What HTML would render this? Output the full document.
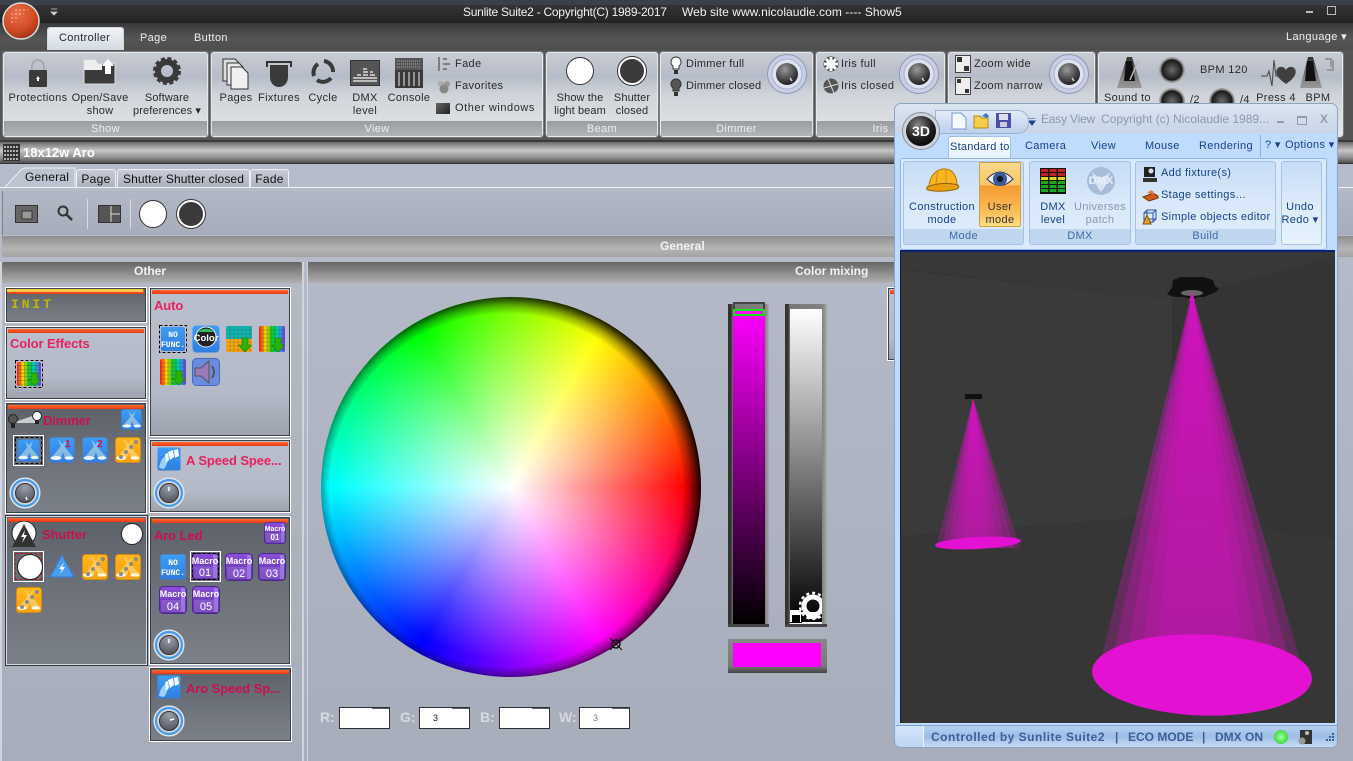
<!DOCTYPE html>
<html><head><meta charset="utf-8"><style>
html,body{margin:0;padding:0}
body{width:1353px;height:761px;overflow:hidden;position:relative;background:#a9afbd;font-family:"Liberation Sans",sans-serif;font-size:11px;color:#2a2a2a}
div,svg{position:absolute}
.t{position:absolute;white-space:nowrap;letter-spacing:.35px;line-height:13px}
.c{transform:translateX(-50%);text-align:center}
.g{background:linear-gradient(#c8ccd4,#b6bcc8 28%,#cfd4da 50%,#e3e6e8 100%);border:1px solid #e6e8ea;border-radius:3px;top:52px;height:83px;box-shadow:0 0 0 1px #77797c}
.gl{position:absolute;left:0;right:0;bottom:0;height:15px;background:linear-gradient(#9a9d9f,#b2b5b7);color:#eee;text-align:center;line-height:16px;letter-spacing:.35px}
.p{border:1px solid #fff;box-shadow:inset 0 0 0 1px #3d4048;background:linear-gradient(#b9bfcc,#b4bac7 70%,#9ca2ad)}
.p:before{content:"";position:absolute;left:2px;right:2px;top:2px;height:4px;background:linear-gradient(#ff6a2a,#e8391a)}
.d{background:linear-gradient(#5d616a,#6f747d 60%,#7b8089)}
.h{color:#e8215f;font-weight:bold;font-size:13px;position:absolute;white-space:nowrap;letter-spacing:-.1px}
.d .h{color:#c8124e}
.b{font-size:12px;font-weight:bold;color:#f2f2f2;position:absolute;white-space:nowrap}
.bt{color:#15428b;position:absolute;white-space:nowrap;letter-spacing:.35px;line-height:13px}
.tb{position:absolute;top:169px;height:18px;border:1px solid #eef0f4;border-bottom:0;border-radius:3px 3px 0 0;background:linear-gradient(#c8ccd6,#aab0be);color:#111;font-size:12px;line-height:18px;text-align:center;letter-spacing:.3px}
.in{position:absolute;top:707px;width:49px;height:20px;background:#fff;border:1px solid #2e3034;font-size:9px;color:#111;line-height:20px}
.in:after{content:"";position:absolute;right:0;top:0;width:17px;height:1px;background:#5c6272}
.lb{position:absolute;top:709px;font-size:14px;font-weight:bold;color:#d7dbe0}
.cn path{opacity:.42}
</style></head><body>

<svg width="0" height="0" style="left:0;top:0"><defs>
<linearGradient id="blue" x1="0" y1="0" x2="0" y2="1"><stop offset="0" stop-color="#3d9cf5"/><stop offset="1" stop-color="#2f7fe0"/></linearGradient>
<linearGradient id="ora" x1="0" y1="0" x2="0" y2="1"><stop offset="0" stop-color="#ffb81f"/><stop offset="1" stop-color="#f7a010"/></linearGradient>
<linearGradient id="pur" x1="0" y1="0" x2="0" y2="1"><stop offset="0" stop-color="#8a4fd8"/><stop offset="1" stop-color="#5f2fa8"/></linearGradient>
<linearGradient id="rb" x1="0" y1="0" x2="1" y2="0"><stop offset="0" stop-color="#f11"/><stop offset=".25" stop-color="#fd0"/><stop offset=".5" stop-color="#1c2"/><stop offset=".75" stop-color="#0cc"/><stop offset="1" stop-color="#83e"/></linearGradient>
<linearGradient id="metal" x1="0" y1="0" x2="0" y2="1"><stop offset="0" stop-color="#333"/><stop offset=".55" stop-color="#777"/><stop offset="1" stop-color="#999"/></linearGradient>
<radialGradient id="kn" cx=".4" cy=".3" r=".8"><stop offset="0" stop-color="#999"/><stop offset=".6" stop-color="#444"/><stop offset="1" stop-color="#111"/></radialGradient>
<radialGradient id="kn2" cx=".5" cy=".2" r=".9"><stop offset="0" stop-color="#9aa0aa"/><stop offset="1" stop-color="#474c55"/></radialGradient>
<radialGradient id="btn" cx=".5" cy=".5" r=".5"><stop offset="0" stop-color="#6a6a6a"/><stop offset=".62" stop-color="#2a2a2a"/><stop offset=".78" stop-color="#1a1a1a"/><stop offset=".88" stop-color="#888"/><stop offset="1" stop-color="#aaa"/></radialGradient>
<linearGradient id="cone1" gradientUnits="userSpaceOnUse" x1="0" y1="290" x2="0" y2="670"><stop offset="0" stop-color="#dc10c8" stop-opacity="1"/><stop offset=".5" stop-color="#cc14b8" stop-opacity=".88"/><stop offset="1" stop-color="#cc14b8" stop-opacity=".62"/></linearGradient>
<linearGradient id="cone2" gradientUnits="userSpaceOnUse" x1="0" y1="397" x2="0" y2="545"><stop offset="0" stop-color="#dc10c8" stop-opacity="1"/><stop offset=".5" stop-color="#cc14b8" stop-opacity=".88"/><stop offset="1" stop-color="#cc14b8" stop-opacity=".62"/></linearGradient>
<symbol id="bl" viewBox="0 0 26 26"><rect x=".5" y=".5" width="25" height="25" rx="3" fill="url(#blue)"/><path d="M18 2L2 21h10zM9 2l7 19h9z" fill="#dcecd8" opacity=".5"/><ellipse cx="7" cy="21" rx="5.500" ry="2" fill="#eef6ff"/><ellipse cx="20" cy="21" rx="4.500" ry="1.800" fill="#eef6ff"/></symbol>
<symbol id="or" viewBox="0 0 26 26"><rect x=".5" y=".5" width="25" height="25" rx="3" fill="url(#ora)" stroke="#d68a10"/><path d="M18 2L2 21h10zM9 2l7 19h9z" fill="#ffe9a8" opacity=".5"/><ellipse cx="6" cy="21" rx="5" ry="2" fill="#fff6d8"/><ellipse cx="20" cy="21" rx="4.500" ry="1.800" fill="#fff6d8"/><g fill="#8a8a8a"><circle cx="6" cy="20" r="2"/><circle cx="11" cy="15" r="2"/><circle cx="16" cy="10" r="2"/><circle cx="21" cy="5" r="2"/></g></symbol>
<symbol id="mc" viewBox="0 0 28 28"><rect x=".5" y=".5" width="27" height="27" rx="4" fill="url(#pur)" stroke="#4a2a90"/><rect x="22" y="2" width="4" height="24" fill="#b79ae8" opacity=".6"/><rect x="2" y="14" width="24" height="12" fill="#a27ae0" opacity=".45"/></symbol>
<symbol id="grid" viewBox="0 0 26 26"><rect width="26" height="26" rx="2" fill="url(#rb)"/><path d="M4 0v26M8 0v26M12 0v26M16 0v26M20 0v26M24 0v26M0 4h26M0 8h26M0 12h26M0 16h26M0 20h26M0 24h26" stroke="#333" stroke-width=".6" opacity=".5"/><path d="M16 12h6v7h3.500L19 26l-6.500-7H16z" fill="#2db400" stroke="#1a7a00" stroke-width=".6"/></symbol>
<symbol id="gridb" viewBox="0 0 26 26"><rect width="26" height="13" rx="1" fill="#12b6b0"/><rect y="13" width="26" height="13" rx="1" fill="#f5a810"/><path d="M4 0v26M8 0v26M12 0v26M16 0v26M20 0v26M24 0v26M0 4h26M0 8h26M0 12h26M0 16h26M0 20h26M0 24h26" stroke="#333" stroke-width=".6" opacity=".4"/><path d="M16 12h6v7h3.500L19 26l-6.500-7H16z" fill="#2db400" stroke="#1a7a00" stroke-width=".6"/></symbol>
<symbol id="spd" viewBox="0 0 24 24"><rect x=".5" y=".5" width="23" height="23" rx="2" fill="url(#blue)"/><path d="M2 21c1-7 4-11 8-13 1 4 1 9-3 14z" fill="#9cd0fa"/><path d="M11 5l5-2 1 7-4 3zM17 3l4-1 1 7-4 2z" fill="#fff"/><path d="M8 7l3-1 1 7-3 3z" fill="#dff"/></symbol>
<symbol id="kb" viewBox="0 0 32 32"><circle cx="16" cy="16" r="15" fill="#c9ced8" stroke="#e9ecf2"/><circle cx="16" cy="16" r="13" fill="none" stroke="#3f9bf0" stroke-width="2"/><circle cx="16" cy="16" r="11" fill="#d8dade"/><circle cx="16" cy="16" r="9.500" fill="url(#kn2)" stroke="#333"/></symbol>
<symbol id="rk" viewBox="0 0 40 40"><circle cx="20" cy="20" r="19.500" fill="#c9d0e6" stroke="#8f97b8"/><circle cx="20" cy="20" r="15" fill="#dde2f0" stroke="#a8b0cc"/><circle cx="20" cy="20" r="11" fill="url(#kn)"/><path d="M23 24l2 3" stroke="#ddd" stroke-width="1.500"/></symbol>
</defs></svg>

<!-- top chrome -->
<div style="left:0;top:0;width:1353px;height:5px;background:#3c3f4c"></div>
<div style="left:0;top:5px;width:1353px;height:18px;background:linear-gradient(#343434,#232323)"></div>
<div style="left:0;top:23px;width:1353px;height:27px;background:linear-gradient(#3a3a3a,#555 60%,#4e4e4e)"></div>
<div style="left:0;top:50px;width:1353px;height:90px;background:#555"></div>
<svg style="left:2px;top:0" width="40" height="42"><defs><radialGradient id="orb" cx=".4" cy=".3" r=".8"><stop offset="0" stop-color="#e8704a"/><stop offset=".6" stop-color="#d04a22"/><stop offset="1" stop-color="#8a2a14"/></radialGradient><pattern id="dots" width="4" height="4" patternUnits="userSpaceOnUse"><circle cx="2" cy="2" r="1" fill="#ffd0b8" opacity=".55"/></pattern></defs><circle cx="19" cy="21" r="18" fill="url(#orb)" stroke="#ddd" stroke-width="1.500"/><path d="M8 14C12 6 22 6 27 10 21 13 15 19 11 25 8 22 7 18 8 14z" fill="url(#dots)"/></svg>
<svg style="left:50px;top:8px" width="10" height="9"><path d="M1 1h6M1 4h6l-3 3z" stroke="#ccc" fill="#ccc" stroke-width=".8"/></svg>
<div class="t" style="left:463px;top:6px;color:#f2f2f2;font-size:12px;letter-spacing:-.25px">Sunlite Suite2 - Copyright(C) 1989-2017</div>
<div class="t" style="left:682px;top:6px;color:#f2f2f2;font-size:12px;letter-spacing:.05px">Web site www.nicolaudie.com ---- Show5</div>
<div style="left:1306px;top:11px;width:7px;height:2px;background:#bbb"></div>
<div style="left:1327px;top:6px;width:7px;height:7px;border:1px solid #bbb"></div>
<div style="left:47px;top:27px;width:75px;height:22px;background:linear-gradient(#f1f3f6,#d3dbe2);border:1px solid #cfd8dd;border-bottom:0;border-radius:3px 3px 0 0"></div>
<div class="t" style="left:59px;top:32px;color:#1c2430">Controller</div>
<div class="t" style="left:140px;top:32px;color:#eee">Page</div>
<div class="t" style="left:194px;top:32px;color:#eee">Button</div>
<div class="t" style="left:1286px;top:31px;color:#eee">Language ▾</div>

<!-- ribbon groups -->
<div class="g" style="left:3px;width:203px"><div class="gl">Show</div></div>
<div class="g" style="left:211px;width:330px"><div class="gl">View</div></div>
<div class="g" style="left:546px;width:110px"><div class="gl">Beam</div></div>
<div class="g" style="left:660px;width:151px"><div class="gl">Dimmer</div></div>
<div class="g" style="left:816px;width:127px"><div class="gl">Iris</div></div>
<div class="g" style="left:948px;width:145px"><div class="gl"></div></div>
<div class="g" style="left:1098px;width:243px;"></div>

<!-- Show -->
<svg style="left:26px;top:58px" width="24" height="30"><path d="M6 12V8a6 6 0 0 1 12 0v4" fill="none" stroke="#aaa" stroke-width="2"/><rect x="3" y="12" width="18" height="17" rx="1" fill="#3b3b3b"/><path d="M12 18l2 3h-4z" fill="#fff"/><rect x="11" y="21" width="2" height="2" fill="#fff"/></svg>
<svg style="left:83px;top:58px" width="34" height="28"><path d="M1 2h11l3 4h17v20H1z" fill="#3b3b3b" stroke="#ddd"/><path d="M1 2h11l3 4H1z M1 6h18v6H1z" fill="#eee"/><path d="M25 1l6 7h-3v8h-6V8h-3z" fill="#fff"/></svg>
<svg style="left:153px;top:57px" width="28" height="28" viewBox="0 0 28 28"><circle cx="14" cy="14" r="9" fill="none" stroke="#3a3a3a" stroke-width="6"/><circle cx="14" cy="14" r="12.500" fill="none" stroke="#3a3a3a" stroke-width="3" stroke-dasharray="4 2.550"/></svg>
<div class="t c" style="left:38px;top:92px">Protections</div>
<div class="t c" style="left:100px;top:92px;letter-spacing:.2px">Open/Save<br>show</div>
<div class="t c" style="left:167px;top:92px;letter-spacing:.1px">Software<br>preferences ▾</div>

<!-- View -->
<svg style="left:222px;top:58px" width="30" height="32"><path d="M1 1h12l4 4v18H1z" fill="#ddd" stroke="#333"/><path d="M5 5h12l4 4v18H5z" fill="#e8e8e8" stroke="#333"/><path d="M9 9h11l6 6v16H9z" fill="#f0f0f0" stroke="#333"/></svg>
<svg style="left:266px;top:60px" width="26" height="28"><path d="M1 7V2h24v5" fill="none" stroke="#333" stroke-width="2"/><path d="M4 5h18v12c0 6-4 10-9 10S4 23 4 17z" fill="#3a3a3a"/></svg>
<svg style="left:309px;top:58px" width="28" height="28" fill="none" stroke="#3a3a3a" stroke-width="4"><path d="M5 18a10.500 10.500 0 0 1 4-12M15 3a10.500 10.500 0 0 1 9 11M22 20a10.500 10.500 0 0 1-14 2"/></svg>
<svg style="left:350px;top:60px" width="30" height="26"><rect x=".5" y=".5" width="29" height="25" fill="#555" stroke="#333"/><path d="M3 21h24M3 18h24M13 15h5M13 12h5M13 9h4M7 15h4M20 15h5M20 12h3" stroke="#ddd" stroke-width="1.500"/></svg>
<svg style="left:395px;top:58px" width="28" height="30"><rect width="28" height="30" fill="#555"/><rect width="28" height="11" fill="#555"/><path d="M2 3h24M2 6h24M2 9h24" stroke="#aaa" stroke-dasharray="1 1"/><rect y="12" width="28" height="18" fill="#3a3a3a"/><path d="M4 14v14M9 14v14M14 14v14M19 14v14M24 14v14" stroke="#eee"/></svg>
<div class="t c" style="left:236px;top:92px">Pages</div>
<div class="t c" style="left:279px;top:92px">Fixtures</div>
<div class="t c" style="left:323px;top:92px">Cycle</div>
<div class="t c" style="left:365px;top:92px">DMX<br>level</div>
<div class="t c" style="left:409px;top:92px">Console</div>
<svg style="left:437px;top:57px" width="16" height="14"><path d="M2 0v14M6 2h4M6 7h7M6 12h4" stroke="#666" stroke-width="1.500" fill="none"/></svg>
<svg style="left:436px;top:80px" width="16" height="14"><circle cx="5" cy="4" r="3" fill="#aaa"/><circle cx="11" cy="4" r="3" fill="#999"/><circle cx="8" cy="9" r="4.500" fill="#888"/></svg>
<div style="left:436px;top:103px;width:14px;height:11px;background:linear-gradient(135deg,#666,#222)"></div>
<div class="t" style="left:455px;top:58px">Fade</div>
<div class="t" style="left:455px;top:80px">Favorites</div>
<div class="t" style="left:455px;top:102px;letter-spacing:.55px">Other windows</div>

<!-- Beam -->
<div style="left:566px;top:57px;width:26px;height:26px;border-radius:50%;background:#fff;border:1px solid #333"></div>
<div style="left:618px;top:57px;width:24px;height:24px;border-radius:50%;background:#3a3a3a;border:2px solid #fff;box-shadow:0 0 0 1px #333"></div>
<div class="t c" style="left:580px;top:92px;letter-spacing:.1px">Show the<br>light beam</div>
<div class="t c" style="left:632px;top:92px;letter-spacing:.1px">Shutter<br>closed</div>

<!-- Dimmer -->
<svg style="left:669px;top:56px" width="14" height="20"><path d="M7 1a5 5 0 0 1 3 9v3H4v-3a5 5 0 0 1 3-9z" fill="#fff" stroke="#333"/><rect x="5" y="14" width="4" height="4" fill="#333"/></svg>
<svg style="left:669px;top:78px" width="14" height="20"><path d="M7 1a5 5 0 0 1 3 9v3H4v-3a5 5 0 0 1 3-9z" fill="#555" stroke="#333"/><rect x="5" y="14" width="4" height="4" fill="#333"/></svg>
<div class="t" style="left:686px;top:58px;letter-spacing:.25px">Dimmer full</div>
<div class="t" style="left:686px;top:80px;letter-spacing:.15px">Dimmer closed</div>
<svg style="left:767px;top:54px" width="40" height="40"><use href="#rk"/></svg>

<!-- Iris -->
<svg style="left:823px;top:56px" width="16" height="16"><circle cx="8" cy="8" r="7.500" fill="#444"/><path d="M8 1v14M1 8h14M3 3l10 10M13 3L3 13" stroke="#fff" stroke-width="3"/></svg>
<svg style="left:823px;top:78px" width="16" height="16"><circle cx="8" cy="8" r="7.500" fill="#555"/><path d="M8 8L5 1M8 8l7-2M8 8l3 7M8 8L1 10" stroke="#ddd"/></svg>
<div class="t" style="left:841px;top:58px">Iris full</div>
<div class="t" style="left:841px;top:80px">Iris closed</div>
<svg style="left:899px;top:54px" width="40" height="40"><use href="#rk"/></svg>

<!-- Zoom -->
<svg style="left:955px;top:55px" width="16" height="18"><rect x=".5" y=".5" width="15" height="17" fill="#eee" stroke="#444"/><path d="M2 2h5v5H2zM9 11h5v5H9z" fill="#333"/></svg>
<svg style="left:955px;top:77px" width="16" height="18"><rect x=".5" y=".5" width="15" height="17" fill="#eee" stroke="#444"/><path d="M2 2h4v4H2zM10 12h4v4h-4z" fill="#333"/></svg>
<div class="t" style="left:974px;top:58px">Zoom wide</div>
<div class="t" style="left:974px;top:80px">Zoom narrow</div>
<svg style="left:1049px;top:54px" width="40" height="40"><use href="#rk"/></svg>

<!-- Sound -->
<svg style="left:1117px;top:56px" width="26" height="33"><path d="M10 1h5l10 31H0z" fill="url(#metal)"/><path d="M9 5h6l3 20H7z" fill="#111"/><path d="M13 24L21 5" stroke="#bbb" stroke-width="1.500"/></svg>
<svg style="left:1159px;top:57px" width="26" height="26"><circle cx="13" cy="13" r="13" fill="url(#btn)"/></svg>
<svg style="left:1159px;top:88px" width="26" height="17"><circle cx="13" cy="13" r="13" fill="url(#btn)"/></svg>
<svg style="left:1209px;top:88px" width="26" height="17"><circle cx="13" cy="13" r="13" fill="url(#btn)"/></svg>
<div class="t" style="left:1104px;top:92px">Sound to</div>
<div class="t" style="left:1190px;top:94px">/2</div>
<div class="t" style="left:1240px;top:94px">/4</div>
<div class="t" style="left:1200px;top:64px">BPM 120</div>
<svg style="left:1260px;top:58px" width="36" height="30"><path d="M1 18h6l2-5 3 15 2-26 2 16h3" fill="none" stroke="#444"/><path d="M26 26c-9-6-11-11-9-15 2-3 7-3 9 1 2-4 7-4 9-1 2 4 0 9-9 15z" fill="#3f3f3f"/></svg>
<div class="t c" style="left:1276px;top:92px">Press 4</div>
<svg style="left:1300px;top:56px" width="36" height="34"><path d="M8 1h5l9 31H0z" fill="url(#metal)"/><path d="M7 5h6l3 20H5z" fill="#111"/><path d="M25 3h6v8M33 4v10h-6" fill="none" stroke="#999" stroke-width="2"/></svg>
<div class="t c" style="left:1318px;top:92px">BPM</div>

<!-- Title bar second -->
<div style="left:0;top:140px;width:1353px;height:2px;background:#3a3a3a"></div>
<div style="left:0;top:142px;width:1353px;height:21px;background:linear-gradient(#6c6c6c,#c6c6c6 40%,#8d8d8d 75%,#4d4d4d)"></div>
<div style="left:0;top:163px;width:1353px;height:1px;background:#333"></div>
<div style="left:0;top:164px;width:1353px;height:597px;background:linear-gradient(#b6bcca,#a7adbb)"></div>
<svg style="left:3px;top:144px" width="17" height="17"><rect width="17" height="17" fill="#333"/><path d="M1 3h15M1 7h15M1 11h15M1 15h15" stroke="#ddd" stroke-dasharray="2 1" stroke-width="1.500"/></svg>
<div class="t" style="left:23px;top:146px;color:#fff;font-size:13px;font-weight:bold;letter-spacing:0">18x12w Aro</div>

<!-- tabs -->
<svg style="left:4px;top:167px" width="72" height="21"><path d="M0 21L17 3Q19 1 22 1H71V21" fill="#bdc3d0" stroke="#f0f2f6"/></svg>
<div class="t" style="left:25px;top:171px;color:#111;font-size:12px;letter-spacing:.2px">General</div>
<div class="tb" style="left:76px;width:38px">Page</div>
<div class="tb" style="left:117px;width:131px;letter-spacing:.1px">Shutter Shutter closed</div>
<div class="tb" style="left:250px;width:37px">Fade</div>
<div style="left:0;top:187px;width:1353px;height:1px;background:#eef0f4"></div>

<!-- toolbar -->
<div style="left:2px;top:191px;width:1351px;height:44px;background:linear-gradient(#b2b8c6,#a7adbb);border-left:1px solid #7d8088"></div>
<svg style="left:15px;top:205px" width="23" height="18"><rect x=".5" y=".5" width="22" height="17" fill="#666" stroke="#333"/><rect x="7" y="6" width="10" height="8" fill="#999" stroke="#333"/></svg>
<svg style="left:56px;top:204px" width="18" height="18"><circle cx="7" cy="7" r="4.500" fill="none" stroke="#333" stroke-width="2"/><path d="M10 10l6 6" stroke="#333" stroke-width="2.500"/></svg>
<div style="left:87px;top:199px;width:1px;height:30px;background:#d8dbe2"></div>
<svg style="left:98px;top:205px" width="23" height="18"><rect x=".5" y=".5" width="22" height="17" fill="#555" stroke="#333"/><path d="M13 1v16M13 9h9" stroke="#ddd"/></svg>
<div style="left:130px;top:199px;width:1px;height:30px;background:#d8dbe2"></div>
<div style="left:139px;top:200px;width:26px;height:26px;border-radius:50%;background:#fff;border:1px solid #333"></div>
<div style="left:177px;top:200px;width:24px;height:24px;border-radius:50%;background:#3a3a3a;border:2px solid #fff;box-shadow:0 0 0 1px #333"></div>
<div style="left:2px;top:236px;width:1351px;height:21px;background:linear-gradient(#8e8e8e,#b5b5b5 60%,#a3a3a3);border-radius:0 0 0 3px"></div>
<div class="b" style="left:660px;top:239px">General</div>

<!-- Left frame -->
<div style="left:2px;top:262px;width:300px;height:21px;background:linear-gradient(#666,#b0b0b0);border-radius:2px 2px 0 0"></div>
<div class="b" style="left:134px;top:264px">Other</div>
<div style="left:302px;top:262px;width:2px;height:499px;background:#d0d4dc"></div>
<div style="left:0;top:262px;width:2px;height:499px;background:#d0d4dc"></div>
<div style="left:307px;top:262px;width:590px;height:21px;background:linear-gradient(#666,#b0b0b0);border-radius:2px 2px 0 0"></div>
<div class="b" style="left:795px;top:264px">Color mixing</div>
<div style="left:307px;top:262px;width:1px;height:499px;background:#d0d4dc"></div>

<!-- INIT -->
<div class="p" style="left:5px;top:287px;width:140px;height:34px;background:linear-gradient(#5d616a,#7b8089)"></div>
<div style="left:7px;top:289px;width:136px;height:3px;background:#f8c848"></div>
<div style="left:11px;top:297px;font-family:'Liberation Mono',monospace;font-weight:bold;font-size:13px;letter-spacing:2.900px;color:#bdb800;white-space:nowrap">INIT</div>

<!-- Color effects -->
<div class="p" style="left:5px;top:326px;width:140px;height:72px"><div class="h" style="left:4px;top:9px">Color Effects</div></div>
<svg style="left:15px;top:360px" width="28" height="28"><rect x=".5" y=".5" width="27" height="27" fill="none" stroke="#000" stroke-dasharray="3 2"/><use href="#grid" x="2" y="2" width="24" height="24"/></svg>

<!-- Auto -->
<div class="p" style="left:149px;top:287px;width:140px;height:148px"><div class="h" style="left:4px;top:10px">Auto</div></div>
<svg style="left:159px;top:325px" width="28" height="28"><rect x=".5" y=".5" width="27" height="27" fill="none" stroke="#000" stroke-dasharray="3 2"/><rect x="2" y="2" width="24" height="24" rx="2" fill="url(#blue)"/><text x="14" y="12" font-size="8" font-weight="bold" fill="#fff" text-anchor="middle" font-family="Liberation Mono">NO</text><text x="14" y="22" font-size="8" font-weight="bold" fill="#fff" text-anchor="middle" font-family="Liberation Mono">FUNC.</text></svg>
<svg style="left:192px;top:325px" width="28" height="28"><rect x=".5" y=".5" width="27" height="27" rx="4" fill="url(#blue)"/><circle cx="14" cy="12" r="10" fill="#222" stroke="#eee"/><path d="M6 7a10 8 0 0 1 16 0z" fill="#3b6"/><text x="14" y="16" font-size="9.500" font-weight="bold" fill="#fff" text-anchor="middle">Color</text></svg>
<svg style="left:226px;top:326px" width="26" height="26"><use href="#gridb"/></svg>
<svg style="left:259px;top:326px" width="26" height="26"><use href="#grid"/></svg>
<svg style="left:160px;top:359px" width="26" height="26"><use href="#grid"/></svg>
<svg style="left:192px;top:358px" width="28" height="28"><rect x=".5" y=".5" width="27" height="27" rx="4" fill="#6a8ce0" stroke="#4a68c0"/><path d="M3 10h6l8-7v22l-8-7H3z" fill="#9a7ab8" stroke="#555"/><path d="M20 8q4 6 0 12" stroke="#555" stroke-width="2" fill="none"/></svg>

<!-- Dimmer panel -->
<div class="p d" style="left:5px;top:402px;width:140px;height:110px"><div class="h" style="left:37px;top:10px">Dimmer</div></div>
<svg style="left:8px;top:409px" width="34" height="22"><path d="M4 14L30 5v9z" fill="#ccc"/><circle cx="5" cy="10" r="4.500" fill="#555" stroke="#222"/><rect x="3" y="14" width="4" height="5" fill="#222"/><circle cx="29" cy="7" r="4.500" fill="#fff" stroke="#222"/><rect x="27" y="11" width="4" height="4" fill="#222"/></svg>
<svg style="left:121px;top:409px" width="21" height="21"><use href="#bl"/></svg>
<div style="left:13px;top:435px;width:29px;height:29px;border:1px solid #fff"></div>
<svg style="left:15px;top:437px" width="27" height="27"><rect x=".5" y=".5" width="26" height="26" fill="none" stroke="#000" stroke-dasharray="3 2"/><use href="#bl" x="2" y="2" width="23" height="23"/></svg>
<svg style="left:49px;top:437px" width="26" height="26"><use href="#bl"/><text x="16" y="10" font-size="10" font-weight="bold" fill="#d01050">1</text></svg>
<svg style="left:82px;top:437px" width="26" height="26"><use href="#bl"/><text x="15" y="10" font-size="10" font-weight="bold" fill="#d01050">2</text></svg>
<svg style="left:115px;top:437px" width="26" height="26"><use href="#or"/></svg>
<svg style="left:9px;top:477px" width="32" height="32"><use href="#kb"/><path d="M17 20l1 3" stroke="#fff" stroke-width="1.500"/></svg>

<!-- A Speed -->
<div class="p" style="left:149px;top:439px;width:140px;height:72px"><div class="h" style="left:36px;top:13px">A Speed Spee...</div></div>
<svg style="left:157px;top:447px" width="24" height="24"><use href="#spd"/></svg>
<svg style="left:153px;top:477px" width="32" height="32"><use href="#kb"/><path d="M16 10v4" stroke="#fff" stroke-width="1.500"/></svg>

<!-- Shutter -->
<div class="p d" style="left:5px;top:515px;width:141px;height:149px;border-color:#33363c;box-shadow:inset 0 0 0 1px #d8dce2"><div class="h" style="left:36px;top:11px">Shutter</div></div>
<svg style="left:11px;top:521px" width="27" height="27"><circle cx="13" cy="12" r="12" fill="#fff" stroke="#222"/><path d="M13 3L25 26H1z" fill="#333"/><path d="M14 9l-4 7h3l-2 6 5-8h-3z" fill="#fff"/></svg>
<div style="left:121px;top:523px;width:20px;height:20px;border-radius:50%;background:#fff;border:1px solid #222"></div>
<div style="left:13px;top:551px;width:29px;height:29px;border:1px solid #fff"></div>
<div style="left:15px;top:553px;width:27px;height:27px;border:1px dashed #c01818;box-sizing:border-box"></div>
<div style="left:17px;top:554px;width:24px;height:24px;border-radius:50%;background:#fff;border:1px solid #222"></div>
<svg style="left:49px;top:554px" width="26" height="24"><path d="M13 1l12 22H1z" fill="#4a9cf0" stroke="#3a7cd0"/><path d="M15 8l-5 7h3l-2 5 5-7h-3z" fill="#fff"/></svg>
<svg style="left:82px;top:554px" width="26" height="26"><use href="#or"/></svg>
<svg style="left:115px;top:554px" width="26" height="26"><use href="#or"/></svg>
<svg style="left:16px;top:587px" width="26" height="26"><use href="#or"/></svg>

<!-- Aro Led -->
<div class="p d" style="left:149px;top:516px;width:140px;height:147px"><div class="h" style="left:4px;top:11px">Aro Led</div></div>
<svg style="left:264px;top:522px" width="22" height="22"><use href="#mc"/><text x="11" y="9" font-size="7" font-weight="bold" fill="#fff" text-anchor="middle">Macro</text><text x="11" y="18" font-size="8" font-weight="bold" fill="#fff" text-anchor="middle">01</text></svg>
<svg style="left:160px;top:554px" width="26" height="26"><rect x=".5" y=".5" width="25" height="25" rx="2" fill="url(#blue)"/><text x="13" y="11" font-size="8" font-weight="bold" fill="#fff" text-anchor="middle" font-family="Liberation Mono">NO</text><text x="13" y="21" font-size="8" font-weight="bold" fill="#fff" text-anchor="middle" font-family="Liberation Mono">FUNC.</text></svg>
<div style="left:190px;top:551px;width:29px;height:29px;border:1px solid #fff"></div>
<svg style="left:192px;top:553px" width="27" height="27"><use href="#mc"/><rect x=".5" y=".5" width="26" height="26" fill="none" stroke="#000" stroke-dasharray="3 2"/><text x="13" y="11" font-size="9" font-weight="bold" fill="#fff" text-anchor="middle">Macro</text><text x="13" y="23" font-size="11" fill="#fff" text-anchor="middle">01</text></svg>
<svg style="left:225px;top:553px" width="28" height="28"><use href="#mc"/><text x="14" y="11" font-size="9" font-weight="bold" fill="#fff" text-anchor="middle">Macro</text><text x="14" y="24" font-size="11" fill="#fff" text-anchor="middle">02</text></svg>
<svg style="left:258px;top:553px" width="28" height="28"><use href="#mc"/><text x="14" y="11" font-size="9" font-weight="bold" fill="#fff" text-anchor="middle">Macro</text><text x="14" y="24" font-size="11" fill="#fff" text-anchor="middle">03</text></svg>
<svg style="left:159px;top:586px" width="28" height="28"><use href="#mc"/><text x="14" y="11" font-size="9" font-weight="bold" fill="#fff" text-anchor="middle">Macro</text><text x="14" y="24" font-size="11" fill="#fff" text-anchor="middle">04</text></svg>
<svg style="left:192px;top:586px" width="28" height="28"><use href="#mc"/><text x="14" y="11" font-size="9" font-weight="bold" fill="#fff" text-anchor="middle">Macro</text><text x="14" y="24" font-size="11" fill="#fff" text-anchor="middle">05</text></svg>
<svg style="left:153px;top:629px" width="32" height="32"><use href="#kb"/><path d="M16 10v4" stroke="#fff" stroke-width="1.500"/></svg>

<!-- Aro Speed -->
<div class="p d" style="left:149px;top:667px;width:141px;height:73px"><div class="h" style="left:36px;top:13px">Aro Speed Sp...</div></div>
<svg style="left:157px;top:675px" width="24" height="24"><use href="#spd"/></svg>
<svg style="left:153px;top:705px" width="32" height="32"><use href="#kb"/><path d="M17 15l4-1" stroke="#fff" stroke-width="1.500"/></svg>

<!-- Wheel -->
<div style="left:321px;top:297px;width:380px;height:380px;border-radius:50%;background:conic-gradient(from 30deg,#ff0 0deg,#f00 60deg,#f0f 120deg,#00f 180deg,#0ff 240deg,#0f0 300deg,#ff0 360deg)"></div>
<div style="left:321px;top:297px;width:380px;height:380px;border-radius:50%;background:radial-gradient(circle closest-side,#fff 0,rgba(255,255,255,0) 92%)"></div>
<div style="left:321px;top:297px;width:380px;height:380px;border-radius:50%;background:radial-gradient(circle 196px at 48.7% 50.8%,rgba(0,0,0,0) 90%,rgba(0,0,0,.3) 94%,rgba(0,0,0,.95) 100%)"></div>
<svg style="left:609px;top:637px" width="14" height="14"><circle cx="7" cy="7" r="4" fill="none" stroke="#111" stroke-width="1.500"/><path d="M1 1l12 12M13 1L1 13" stroke="#111"/></svg>

<!-- Sliders -->
<div style="left:728px;top:304px;width:41px;height:323px;background:linear-gradient(90deg,#333 0,#333 3px,#777 5px,#808080 37px,#aaa 100%)"></div>
<div style="left:728px;top:624px;width:41px;height:3px;background:#444"></div>
<div style="left:733px;top:309px;width:32px;height:315px;background:linear-gradient(#f0f,#000)"></div>
<div style="left:733px;top:302px;width:28px;height:7px;border:2px solid #444;border-bottom:0"></div>
<div style="left:733px;top:309px;width:28px;height:3px;border:2px solid #17e017;background:#f0f"></div>
<div style="left:785px;top:304px;width:42px;height:323px;background:linear-gradient(90deg,#333 0,#333 3px,#777 5px,#808080 37px,#aaa 100%)"></div>
<div style="left:785px;top:624px;width:42px;height:3px;background:#444"></div>
<div style="left:790px;top:309px;width:32px;height:315px;background:linear-gradient(#fff,#000)"></div>
<svg style="left:790px;top:590px" width="32" height="34"><circle cx="23" cy="16" r="9" fill="none" stroke="#fff" stroke-width="5"/><circle cx="23" cy="16" r="13" fill="none" stroke="#fff" stroke-width="2.500" stroke-dasharray="3 3"/><path d="M0 22h32v2H0zM0 20h11v12H0zM12 32h20v2H12z" fill="#fff"/><rect x="2" y="25" width="8" height="7" fill="#000"/><rect x="0" y="33" width="32" height="1" fill="#eee"/><path d="M15 24h14v3l-3 2h-8z" fill="#fff"/></svg>
<div style="left:728px;top:639px;width:99px;height:34px;background:linear-gradient(#888,#777 80%,#444)"></div>
<div style="left:733px;top:643px;width:88px;height:24px;background:#f0f"></div>

<!-- RGB -->
<div class="lb" style="left:320px">R:</div><div class="in" style="left:339px"></div>
<div class="lb" style="left:400px">G:</div><div class="in" style="left:419px;text-indent:13px">3</div>
<div class="lb" style="left:480px">B:</div><div class="in" style="left:499px"></div>
<div class="lb" style="left:559px">W:</div><div class="in" style="left:579px;text-indent:13px;color:#777">3</div>

<!-- right small panel edge -->
<div class="p" style="left:887px;top:287px;width:12px;height:72px"></div>

<!-- 3D window -->
<div style="left:895px;top:104px;width:442px;height:643px;border-radius:6px 6px 6px 6px;background:#bfdbff;box-shadow:0 0 0 1px #8ea3c0"></div>
<div style="left:895px;top:104px;width:442px;height:29px;border-radius:6px 6px 0 0;background:linear-gradient(#dbe6f2,#c8d5e6)"></div>
<div style="left:935px;top:110px;width:92px;height:22px;border-radius:0 11px 11px 0;background:linear-gradient(#e3ecf8,#bcd0ea);border:1px solid #9db3d2"></div>
<svg style="left:902px;top:111px" width="40" height="40"><defs><radialGradient id="o3d" cx=".4" cy=".3" r=".8"><stop offset="0" stop-color="#888"/><stop offset=".55" stop-color="#222"/><stop offset="1" stop-color="#000"/></radialGradient></defs><circle cx="19" cy="20" r="18.500" fill="#cfd4dc" stroke="#8a8f98"/><circle cx="19" cy="20" r="15" fill="url(#o3d)"/><text x="19" y="25" font-size="14" font-weight="bold" fill="#fff" text-anchor="middle">3D</text></svg>
<svg style="left:951px;top:112px" width="16" height="18"><path d="M1 1h9l5 5v11H1z" fill="#f4f8ff" stroke="#7a98c8"/></svg>
<svg style="left:973px;top:112px" width="18" height="17"><path d="M1 4h6l2 2h6v10H1z" fill="#f3cc50" stroke="#b08820"/><path d="M9 4l4-3 3 3-2 2z" fill="#3a78c8"/></svg>
<svg style="left:996px;top:113px" width="15" height="15"><rect width="15" height="15" fill="#4a50a8"/><rect x="3" y="1" width="9" height="6" fill="#dde"/><rect x="4" y="9" width="7" height="5" fill="#ccd"/></svg>
<svg style="left:1029px;top:118px" width="8" height="8"><path d="M0 0h6M0 3h6l-3 4z" stroke="#15428b" fill="#15428b"/></svg>
<div class="t" style="left:1041px;top:113px;color:#8a98ac;font-size:12px;letter-spacing:-.2px">Easy View</div>
<div class="t" style="left:1101px;top:113px;color:#8a98ac;font-size:12px;letter-spacing:0">Copyright (c) Nicolaudie 1989...</div>
<div style="left:1277px;top:121px;width:7px;height:2px;background:#99a"></div>
<div style="left:1297px;top:116px;width:8px;height:6px;border:1px solid #99a;border-top-width:2px"></div>
<div class="t" style="left:1320px;top:113px;font-size:12px;font-weight:bold;color:#99a">X</div>

<div style="left:948px;top:136px;width:61px;height:22px;background:linear-gradient(#fff,#e4f0fe);border:1px solid #9cc0e8;border-bottom:0;border-radius:3px 3px 0 0;overflow:hidden"><div class="bt" style="left:1px;top:4px;letter-spacing:.25px">Standard tool</div></div>
<div class="bt" style="left:1025px;top:140px">Camera</div>
<div class="bt" style="left:1091px;top:140px">View</div>
<div class="bt" style="left:1145px;top:140px">Mouse</div>
<div class="bt" style="left:1199px;top:140px">Rendering</div>
<div style="left:1260px;top:135px;width:1px;height:22px;background:#8fb0d8"></div>
<div class="bt" style="left:1265px;top:139px">? ▾</div>
<div class="bt" style="left:1285px;top:139px">Options ▾</div>

<div style="left:900px;top:158px;width:425px;height:90px;background:#dbeafb;border:1px solid #8db2e3;border-radius:3px"></div>
<div style="left:903px;top:161px;width:121px;height:84px;background:linear-gradient(#c6dcf6,#d8e7fa 45%,#e0eefc);border:1px solid #a4c2e8;border-radius:3px;box-sizing:border-box"><div style="position:absolute;left:0;right:0;bottom:0;height:15px;background:#c0d6ef;color:#3e6aaa;text-align:center;line-height:15px;letter-spacing:.35px">Mode</div></div>
<div style="left:1029px;top:161px;width:102px;height:84px;background:linear-gradient(#c6dcf6,#d8e7fa 45%,#e0eefc);border:1px solid #a4c2e8;border-radius:3px;box-sizing:border-box"><div style="position:absolute;left:0;right:0;bottom:0;height:15px;background:#c0d6ef;color:#3e6aaa;text-align:center;line-height:15px;letter-spacing:.35px">DMX</div></div>
<div style="left:1135px;top:161px;width:141px;height:84px;background:linear-gradient(#c6dcf6,#d8e7fa 45%,#e0eefc);border:1px solid #a4c2e8;border-radius:3px;box-sizing:border-box"><div style="position:absolute;left:0;right:0;bottom:0;height:15px;background:#c0d6ef;color:#3e6aaa;text-align:center;line-height:15px;letter-spacing:.35px">Build</div></div>
<div style="left:1281px;top:161px;width:41px;height:84px;background:linear-gradient(#c6dcf6,#dbe9fb 45%,#e6f2fe);border:1px solid #a4c2e8;border-radius:3px;box-sizing:border-box"></div>

<div style="left:979px;top:162px;width:42px;height:65px;background:linear-gradient(#fbd88c,#f8c868 35%,#f59a30 36%,#fbbf5a 80%,#ffe08a);border:1px solid #d0a040;border-radius:2px;box-sizing:border-box"></div>
<svg style="left:926px;top:167px" width="34" height="27"><path d="M3 20C3 8 12 1 20 2c8 1 11 9 11 16z" fill="#f7b520" stroke="#b07808"/><path d="M12 4q-2 8-2 15M20 2v16" stroke="#d89010"/><path d="M1 20q16-6 31-2 2 2-1 4-16 4-29 1-2-1-1-3z" fill="#e8a010" stroke="#906008"/></svg>
<svg style="left:986px;top:168px" width="28" height="22"><path d="M1 11Q14-3 27 11 14 24 1 11z" fill="#e8eef8" stroke="#335"/><circle cx="14" cy="11" r="7" fill="#3a5a90"/><circle cx="14" cy="11" r="3" fill="#0b1220"/></svg>
<svg style="left:1040px;top:168px" width="26" height="26"><rect width="26" height="26" fill="#111"/><g fill="#1ca81c"><rect x="1" y="13" width="7" height="3"/><rect x="9.500" y="13" width="7" height="3"/><rect x="18" y="13" width="7" height="3"/><rect x="1" y="17" width="7" height="3"/><rect x="9.500" y="17" width="7" height="3"/><rect x="18" y="17" width="7" height="3"/><rect x="1" y="21" width="7" height="3"/><rect x="9.500" y="21" width="7" height="3"/><rect x="18" y="21" width="7" height="3"/></g><g fill="#e0d810"><rect x="1" y="9" width="7" height="3"/><rect x="9.500" y="9" width="7" height="3"/><rect x="18" y="9" width="7" height="3"/></g><g fill="#c02020"><rect x="1" y="1" width="7" height="3"/><rect x="9.500" y="1" width="7" height="3"/><rect x="18" y="1" width="7" height="3"/><rect x="1" y="5" width="7" height="3"/><rect x="9.500" y="5" width="7" height="3"/><rect x="18" y="5" width="7" height="3"/></g></svg>
<svg style="left:1086px;top:166px" width="30" height="30"><circle cx="15" cy="15" r="14" fill="#a6bcd8"/><path d="M6 6q9 10 18 0-2 12-9 20Q8 18 6 6z" fill="#d8e4f2"/><text x="15" y="18" font-size="11" font-weight="bold" fill="#e8f0fa" text-anchor="middle">DMX</text></svg>
<div class="bt c" style="left:942px;top:201px;text-align:center">Construction<br>mode</div>
<div class="bt c" style="left:1000px;top:201px;text-align:center;color:#333">User<br>mode</div>
<div class="bt c" style="left:1053px;top:201px;text-align:center">DMX<br>level</div>
<div class="bt c" style="left:1100px;top:201px;text-align:center;color:#8a98ac">Universes<br>patch</div>
<svg style="left:1142px;top:165px" width="16" height="18"><path d="M2 2h11v10H2z" fill="#222"/><circle cx="9" cy="6" r="2.500" fill="#dde"/><rect x="1" y="13" width="14" height="4" fill="#333"/></svg>
<svg style="left:1142px;top:188px" width="17" height="14"><path d="M1 9l10-4 5 3v2l-9 3z" fill="#d05a18" stroke="#703010"/><path d="M5 5l4-3 3 2v2z" fill="#e88040"/></svg>
<svg style="left:1142px;top:209px" width="16" height="16"><path d="M5 1h9v9H5zM2 4h9v9H2zM2 4l3-3M11 4l3-3M11 13l3-3" fill="none" stroke="#3050b0"/><path d="M1 15l4-9 4 9z" fill="#e8a020" stroke="#805010"/></svg>
<div class="bt" style="left:1161px;top:167px">Add fixture(s)</div>
<div class="bt" style="left:1161px;top:189px">Stage settings...</div>
<div class="bt" style="left:1161px;top:211px">Simple objects editor</div>
<div class="bt c" style="left:1300px;top:201px;text-align:center">Undo<br>Redo ▾</div>

<!-- viewport -->
<svg style="left:900px;top:250px" width="435" height="473" viewBox="900 250 435 473">
<rect x="900" y="250" width="435" height="473" fill="#353535"/>
<path d="M900 250H1335V256L1172 300 900 268z" fill="#383838"/>
<path d="M900 270L1172 300V515L900 536z" fill="#3a3a3a"/>
<path d="M1172 300L1335 260V540L1172 515z" fill="#343434"/>
<path d="M1172 300l8 0v100l-8 0z" fill="#333"/>
<path d="M900 536L1172 515 1335 540V723H900z" fill="#363636"/>
<rect x="900" y="250" width="1" height="473" fill="#111a40"/>
<rect x="900" y="250" width="435" height="2" fill="#0c2070"/>
<g class="cn" fill="url(#cone1)">
<path d="M1192 292L1096 680H1306z"/>
<path d="M1192 292L1108 680H1294z"/>
<path d="M1192 292L1122 680H1280z"/>
<path d="M1192 292L1138 680H1264z"/>
<path d="M1192 292L1154 680H1248z"/>
</g>
<g class="cn" fill="url(#cone2)">
<path d="M973 398L936 548H1020z"/>
<path d="M973 398L942 548H1014z"/>
<path d="M973 398L948 548H1006z"/>
<path d="M973 398L955 548H998z"/>
<path d="M973 398L962 548H990z"/>
</g>
<ellipse cx="1202" cy="675" rx="110" ry="40.500" transform="rotate(2 1202 675)" fill="#e311d2"/>
<ellipse cx="978" cy="543" rx="43" ry="6" transform="rotate(-3 978 543)" fill="#e311d2"/>
<path d="M1167 294l5-6 1-8 8-3h22l10 3 2 6 4 3-3 3-12 5h-6l-6 3-8-3-10 0z" fill="#111"/>
<ellipse cx="1192" cy="293" rx="11" ry="3" fill="#666"/>
<path d="M1192 291l3 10h-6z" fill="#d018b8"/>
<rect x="965" y="394" width="17" height="5" fill="#111"/>
</svg>

<!-- status -->
<div style="left:896px;top:725px;width:441px;height:22px;border-radius:0 0 6px 6px;background:linear-gradient(#b6d0f2,#9dbde6 50%,#c9dcf5);border-top:1px solid #7da2d4;box-sizing:border-box"></div>
<div style="left:896px;top:726px;width:27px;height:21px;background:linear-gradient(#d5e5fa,#bdd4f2);border-right:1px solid #f0f6fe;border-radius:0 0 0 6px"></div>
<div class="t" style="left:931px;top:731px;color:#3d5f96;font-size:12px;font-weight:bold;letter-spacing:.5px">Controlled by Sunlite Suite2</div>
<div class="t" style="left:1115px;top:731px;color:#3d5f96;font-size:12px;font-weight:bold">|</div>
<div class="t" style="left:1128px;top:731px;color:#3d5f96;font-size:12px;font-weight:bold;letter-spacing:0">ECO MODE</div>
<div class="t" style="left:1202px;top:731px;color:#3d5f96;font-size:12px;font-weight:bold">|</div>
<div class="t" style="left:1215px;top:731px;color:#3d5f96;font-size:12px;font-weight:bold;letter-spacing:0">DMX ON</div>
<div style="left:1274px;top:730px;width:14px;height:14px;border-radius:50%;background:radial-gradient(#a0ffa0,#30d830 80%,#20b020)"></div>
<svg style="left:1297px;top:729px" width="16" height="16"><path d="M3 1h12v14H6l-3-2z" fill="#333"/><circle cx="10" cy="4" r="2" fill="#bbb"/><circle cx="5" cy="12" r="3.500" fill="#999"/></svg>
<svg style="left:1325px;top:733px" width="10" height="10"><g fill="#3d5f96"><rect x="7" y="0" width="2" height="2"/><rect x="4" y="3" width="2" height="2"/><rect x="7" y="3" width="2" height="2"/><rect x="1" y="6" width="2" height="2"/><rect x="4" y="6" width="2" height="2"/><rect x="7" y="6" width="2" height="2"/></g></svg>
</body></html>
